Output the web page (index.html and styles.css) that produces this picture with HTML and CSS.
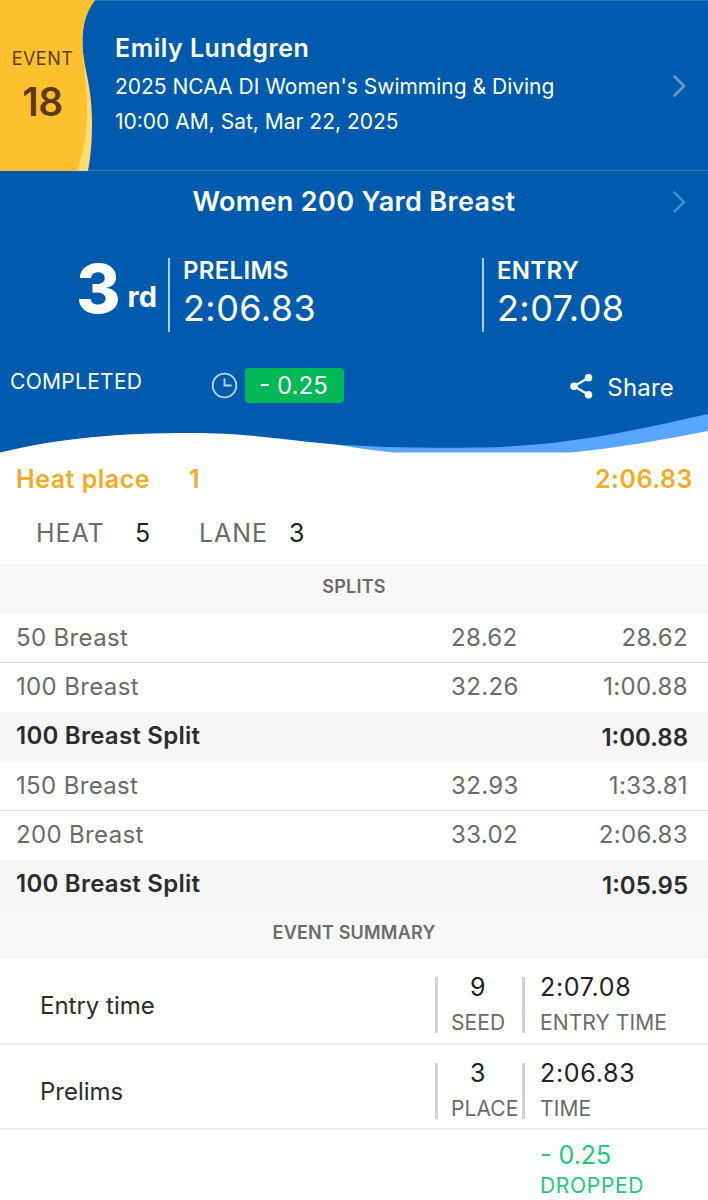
FILE: index.html
```
<!DOCTYPE html>
<html lang="en">
<head>
    <meta charset="utf-8">
    <title>Women 200 Yard Breast</title>
    <link rel="stylesheet" href="styles.css">
</head>
<body>
    <div class="hero">
        <div class="meet">
            <div class="badge">
                <svg class="badge-bg" width="100" height="171" viewBox="0 0 100 171">
                    <path fill="#ffdb70" d="M0 0H95C84 14 81 32 83 52C85 72 92 88 92 122C92 140 91 155 88 171H0Z"/>
                    <path fill="#ffc02e" d="M0 0H95C84 14 81 32 83 52C84 70 87 86 87 110C87 134 83 154 77 171H0Z"/>
                </svg>
                <div class="badge-label">EVENT</div>
                <div class="badge-number">18</div>
            </div>
            <div class="meet-info">
                <div class="swimmer">Emily Lundgren</div>
                <div class="meet-name">2025 NCAA DI Women's Swimming &amp; Diving</div>
                <div class="meet-date">10:00 AM, Sat, Mar 22, 2025</div>
            </div>
            <svg class="chevron" width="16" height="24" viewBox="0 0 16 24"><path d="M3.5 2.5L13 12L3.5 21.5"/></svg>
        </div>

        <div class="event-row">
            <div class="event-title">Women 200 Yard Breast</div>
            <svg class="chevron chevron-blue" width="16" height="24" viewBox="0 0 16 24"><path d="M3.5 2.5L13 12L3.5 21.5"/></svg>
        </div>

        <div class="results">
            <div class="place"><span class="place-num">3</span><span class="place-suffix">rd</span></div>
            <div class="result">
                <div class="result-label">PRELIMS</div>
                <div class="result-time">2:06.83</div>
            </div>
            <div class="result">
                <div class="result-label">ENTRY</div>
                <div class="result-time">2:07.08</div>
            </div>
        </div>

        <div class="status">
            <div class="completed">COMPLETED</div>
            <svg class="clock" width="28" height="28" viewBox="0 0 28 28">
                <circle cx="14.5" cy="14.5" r="11.8"/>
                <path d="M14.5 7.5V14.5H21.5"/>
            </svg>
            <div class="delta">- 0.25</div>
            <div class="share">
                <svg width="24" height="26" viewBox="0 0 24 26">
                    <path d="M19.5 4.8L5 13.3L19.5 21.8" fill="none" stroke="#fff" stroke-width="2.2"/>
                    <circle cx="19.5" cy="4.8" r="3.8"/>
                    <circle cx="5" cy="13.3" r="3.8"/>
                    <circle cx="19.5" cy="21.8" r="3.8"/>
                </svg>
                <span>Share</span>
            </div>
        </div>

        <svg class="wave" width="708" height="40" viewBox="0 413 708 40">
            <path fill="#58a6ff" d="M318 441C346 447 370 450 394 452.5H570C618 448 662 440 708 431V413H318Z"/>
            <path fill="#005baf" d="M0 413V452.5C60 438 120 433 190 433C246 433 290 440 325 443.5C375 448 440 448 480 447.5C570 446 640 429 708 414V413Z"/>
        </svg>
    </div>

    <div class="heat-place">
        <span class="heat-label">Heat place</span>
        <span>1</span>
        <span class="heat-time">2:06.83</span>
    </div>
    <div class="heat-lane">
        <span>HEAT</span><b>5</b>
        <span>LANE</span><b>3</b>
    </div>

    <div class="band">SPLITS</div>
    <div class="split line"><span>50 Breast</span><span>28.62</span><span>28.62</span></div>
    <div class="split"><span>100 Breast</span><span>32.26</span><span>1:00.88</span></div>
    <div class="split total"><span>100 Breast Split</span><span></span><span>1:00.88</span></div>
    <div class="split line"><span>150 Breast</span><span>32.93</span><span>1:33.81</span></div>
    <div class="split"><span>200 Breast</span><span>33.02</span><span>2:06.83</span></div>
    <div class="split total"><span>100 Breast Split</span><span></span><span>1:05.95</span></div>
    <div class="band">EVENT SUMMARY</div>

    <div class="summary">
        <div class="summary-name">Entry time</div>
        <div class="cell">
            <div class="value rank">9</div>
            <div class="label">SEED</div>
        </div>
        <div class="cell">
            <div class="value">2:07.08</div>
            <div class="label">ENTRY TIME</div>
        </div>
    </div>
    <div class="summary">
        <div class="summary-name">Prelims</div>
        <div class="cell">
            <div class="value rank">3</div>
            <div class="label">PLACE</div>
        </div>
        <div class="cell">
            <div class="value">2:06.83</div>
            <div class="label">TIME</div>
        </div>
    </div>
    <div class="dropped">
        <div class="value">- 0.25</div>
        <div class="label">DROPPED</div>
    </div>
</body>
</html>
```
FILE: styles.css
```
* {
    box-sizing: border-box;
}
body {
    margin: 0;
    width: 708px;
    height: 1200px;
    overflow: hidden;
    background-color: #fff;
    color: #6b6b6b;
    font-family: Inter, "Liberation Sans", sans-serif;
    white-space: nowrap;
}
svg {
    display: block;
    flex: none;
}

/* blue header */
.hero {
    height: 453px;
    background-color: #005baf;
    color: #fff;
}
.meet {
    display: flex;
    height: 171px;
    border-top: 1px solid #2b77bf;
    border-bottom: 1px solid #2b77bf;
}
.badge {
    position: relative;
    width: 115px;
    height: 171px;
    margin-top: -1px;
    padding: 46px 30px 0 0;
    text-align: center;
    color: #5f3b15;
}
.badge-bg {
    position: absolute;
    top: 0;
    left: 0;
}
.badge-label {
    position: relative;
    font-size: 18px;
    line-height: 25px;
    letter-spacing: 0.5px;
}
.badge-number {
    position: relative;
    margin-top: 11px;
    font-size: 39px;
    font-weight: 600;
    line-height: 40px;
    letter-spacing: -0.5px;
}
.meet-info {
    flex: 1;
    padding-top: 31px;
}
.swimmer {
    font-size: 25px;
    font-weight: 600;
    line-height: 32px;
    letter-spacing: 0.5px;
}
.meet-name, .meet-date {
    font-size: 21px;
    line-height: 35px;
}
.meet-name {
    margin-top: 5px;
}
.chevron {
    align-self: center;
    margin-right: 21px;
    fill: none;
    stroke: #6b9bca;
    stroke-width: 2.6;
    stroke-linecap: round;
}
.chevron-blue {
    stroke: #3c8ad6;
}
.event-row {
    display: flex;
    height: 62px;
}
.event-title {
    flex: 1;
    padding-left: 37px;
    text-align: center;
    font-size: 27px;
    font-weight: 600;
    line-height: 62px;
    letter-spacing: 0.35px;
}
.results {
    display: grid;
    grid-template-columns: 168px 314px 1fr;
    height: 99px;
    padding-top: 25px;
}
.place {
    display: flex;
    justify-content: flex-end;
    padding-right: 11px;
    line-height: 60px;
}
.place-num {
    font-size: 68px;
    font-weight: 800;
    letter-spacing: -1px;
}
.place-suffix {
    margin-left: 8px;
    padding-top: 9px;
    font-size: 29px;
    font-weight: 700;
}
.result {
    height: 74px;
    padding-left: 13px;
    border-left: 2px solid #a9cdf0;
}
.result-label {
    font-size: 24px;
    font-weight: 600;
    line-height: 25px;
    letter-spacing: 0.3px;
}
.result-time {
    font-size: 36px;
    line-height: 50px;
    letter-spacing: 0.4px;
}
.status {
    display: flex;
    height: 81px;
    padding: 36px 34px 0 10px;
}
.completed {
    width: 200px;
    font-size: 21px;
    line-height: 27px;
    letter-spacing: 0.3px;
}
.clock {
    margin: 3px 7px 0 0;
    fill: none;
    stroke: #b7dcff;
    stroke-width: 1.8;
}
.delta {
    width: 99px;
    height: 35px;
    padding-right: 2px;
    border-radius: 4px;
    background-color: #00b956;
    text-align: center;
    font-size: 24px;
    line-height: 35px;
}
.share {
    display: flex;
    align-items: flex-start;
    gap: 14px;
    margin-left: auto;
    font-size: 24px;
    line-height: 39px;
    letter-spacing: 0.2px;
}
.share svg {
    margin-top: 5px;
    fill: #fff;
}
.wave {
    background-color: #fff;
}

/* heat */
.heat-place {
    display: flex;
    padding: 0 15px 0 16px;
    color: #f5ab1f;
    font-size: 25px;
    font-weight: 600;
    line-height: 52px;
    letter-spacing: 0.5px;
}
.heat-label {
    width: 173px;
}
.heat-time {
    margin-left: auto;
}
.heat-lane {
    display: grid;
    grid-template-columns: 99px 64px 90px 1fr;
    height: 59px;
    padding-left: 36px;
    font-size: 25px;
    line-height: 56px;
    letter-spacing: 0.9px;
}
.heat-lane b {
    color: #222;
    font-weight: 400;
}

/* splits */
.band {
    height: 49.5px;
    background-color: #f7f7f7;
    text-align: center;
    font-size: 18px;
    font-weight: 600;
    line-height: 46px;
    letter-spacing: 0.2px;
}
.split {
    display: grid;
    grid-template-columns: 435px 1fr 120px;
    height: 49.4px;
    padding: 0 20px 0 16px;
    font-size: 24px;
    line-height: 48px;
    letter-spacing: 0.35px;
}
.split span:last-child {
    text-align: right;
}
.line {
    border-bottom: 1px solid #e2e2e2;
}
.total {
    background-color: #f6f6f6;
    color: #2c2c2c;
    font-weight: 600;
    letter-spacing: 0.25px;
}
.total span:last-child {
    line-height: 51px;
    letter-spacing: 0;
}

/* summary */
.summary {
    display: grid;
    grid-template-columns: 395px 87px 1fr;
    height: 85.5px;
    padding: 18px 0 0 40px;
    border-bottom: 2px solid #ececec;
}
.summary-name {
    color: #2c2c2c;
    font-size: 24px;
    line-height: 58px;
}
.cell {
    height: 56px;
    padding-left: 13px;
    border-left: 3px solid #cfd4d9;
}
.cell:last-child {
    padding-left: 15px;
}
.value {
    color: #222;
    font-size: 25px;
    line-height: 20px;
    letter-spacing: 0.7px;
}
.rank {
    width: 54px;
    text-align: center;
}
.label {
    font-size: 21px;
    line-height: 51px;
    letter-spacing: 0.1px;
}
.dropped {
    padding: 15px 0 0 540px;
}
.dropped .value, .dropped .label {
    color: #1fc97c;
}
.dropped .value {
    letter-spacing: 0;
}
.dropped .label {
    line-height: 41px;
    letter-spacing: 0.7px;
}
```
